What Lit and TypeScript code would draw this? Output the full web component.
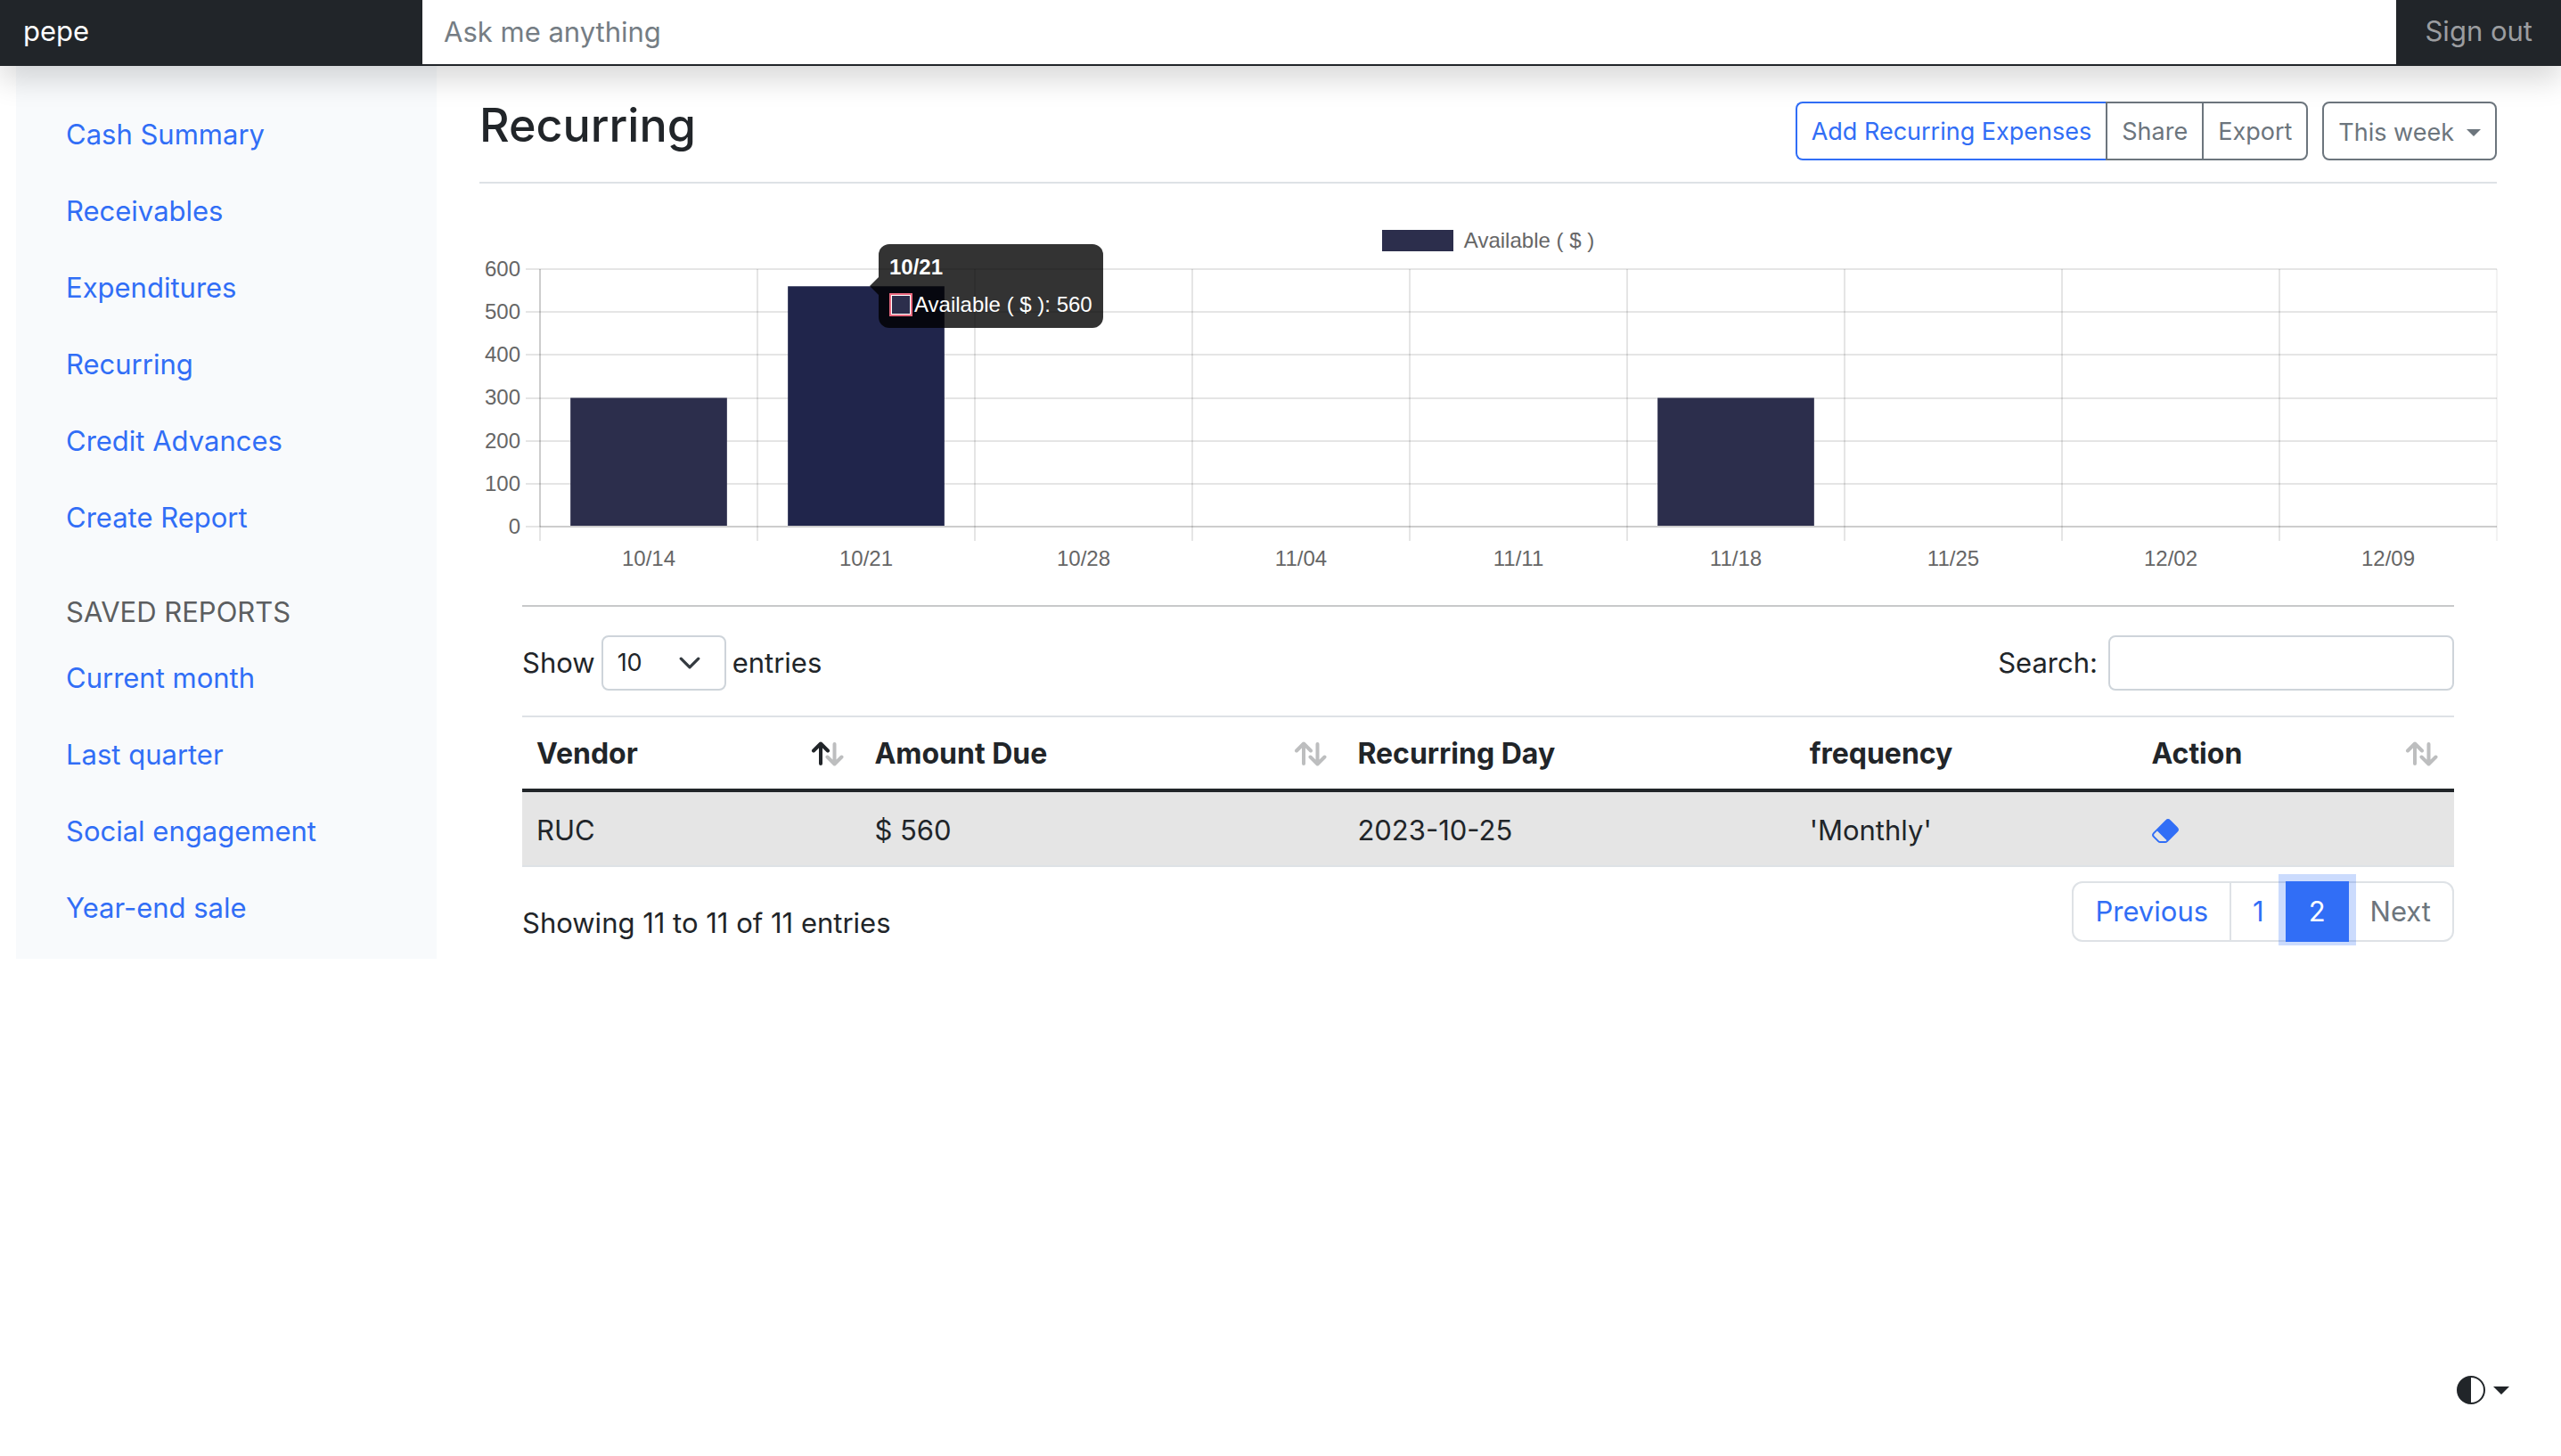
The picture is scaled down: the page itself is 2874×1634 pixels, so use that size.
import { LitElement, html, svg, css } from "lit";
import { customElement, property } from "lit/decorators.js";
import { classMap } from "lit/directives/class-map.js";

const shared = css`
  *,
  *::before,
  *::after {
    box-sizing: border-box;
  }
  a {
    color: #316ef6;
    text-decoration: none;
  }
  button,
  input,
  select {
    font: inherit;
    color: inherit;
    margin: 0;
  }
`;

@customElement("top-bar")
class TopBar extends LitElement {
  static styles = [
    shared,
    css`
      :host {
        display: block;
        position: relative;
        z-index: 2;
      }
      .bar {
        display: flex;
        align-items: stretch;
        height: 74px;
        background: #212529;
        box-shadow: 0 16px 32px rgba(0, 0, 0, 0.15);
      }
      .brand {
        flex: 0 0 474px;
        padding: 16px 26px;
        line-height: 38px;
        color: #fff;
      }
      .ask {
        flex: 1;
        min-width: 0;
        height: 72px;
        padding: 0 24px 2px;
        border: 0;
        border-radius: 0;
        background: #fff;
      }
      .ask::placeholder {
        color: #757d84;
        opacity: 1;
      }
      .out {
        padding: 16px 32px;
        line-height: 38px;
        color: #9b9da0;
        white-space: nowrap;
      }
    `,
  ];
  render() {
    return html`<header class="bar">
      <a class="brand" href="#">pepe</a>
      <input class="ask" type="text" placeholder="Ask me anything" aria-label="Ask me anything" />
      <a class="out" href="#">Sign out</a>
    </header>`;
  }
}

@customElement("side-nav")
class SideNav extends LitElement {
  static styles = [
    shared,
    css`
      :host {
        display: block;
      }
      .nav {
        padding: 34px 24px 14px;
        background: #f8fafc;
      }
      .list {
        list-style: none;
        margin: 0;
        padding: 0;
      }
      .link {
        display: block;
        padding: 18px 32px;
        line-height: 50px;
      }
      .title {
        margin: 22px 0 0;
        padding: 16px 32px 6px;
        font-size: 31px;
        line-height: 50px;
        font-weight: 400;
        text-transform: uppercase;
        color: #5c5e60;
      }
    `,
  ];
  private pages = ["Cash Summary", "Receivables", "Expenditures", "Recurring", "Credit Advances", "Create Report"];
  private reports = ["Current month", "Last quarter", "Social engagement", "Year-end sale"];
  private list(items: string[]) {
    return html`<ul class="list">
      ${items.map((t) => html`<li><a class="link" href="#">${t}</a></li>`)}
    </ul>`;
  }
  render() {
    return html`<nav class="nav">
      ${this.list(this.pages)}
      <h2 class="title">Saved reports</h2>
      ${this.list(this.reports)}
    </nav>`;
  }
}

interface Week {
  label: string;
  value: number;
}

@customElement("bar-chart")
class BarChart extends LitElement {
  static styles = [
    shared,
    css`
      :host {
        display: block;
        font-family: "Liberation Sans", Arial, sans-serif;
        font-size: 24px;
        line-height: 28px;
        color: #666;
      }
      .legend {
        display: flex;
        justify-content: center;
        align-items: center;
        gap: 12px;
        padding: 16px 0 4px;
      }
      .swatch {
        width: 80px;
        height: 24px;
        background: #2c2e4c;
      }
      .body {
        display: grid;
        grid-template-columns: 46px minmax(0, 1fr);
        column-gap: 22px;
      }
      .scale {
        display: flex;
        flex-direction: column;
        justify-content: space-between;
        height: 317px;
        text-align: right;
      }
      .plot {
        position: relative;
        height: 289px;
        margin: 14px 0;
      }
      .canvas {
        display: block;
        width: 100%;
        height: 289px;
        overflow: visible;
      }
      .grid {
        stroke: rgba(0, 0, 0, 0.1);
        stroke-width: 2;
      }
      .edge {
        stroke: rgba(0, 0, 0, 0.1);
        stroke-width: 1;
      }
      .bar {
        fill: #2c2e4c;
      }
      .bar.active {
        fill: #20254b;
      }
      .weeks {
        grid-column: 2;
        display: grid;
        grid-auto-flow: column;
        grid-auto-columns: minmax(0, 1fr);
        margin-top: 8px;
        text-align: center;
      }
      .tip {
        position: absolute;
        top: -28px;
        margin-left: 14px;
        height: 94px;
        padding: 12px;
        border-radius: 12px;
        background: rgba(0, 0, 0, 0.8);
        color: #fff;
        white-space: nowrap;
      }
      .tip::before {
        content: "";
        position: absolute;
        left: -10px;
        top: 37px;
        border: 10px solid transparent;
        border-left-width: 0;
        border-right-color: rgba(0, 0, 0, 0.8);
      }
      .tip-title {
        font-weight: 700;
      }
      .tip-row {
        display: flex;
        align-items: center;
        gap: 2px;
        margin-top: 14px;
      }
      .tip-box {
        width: 26px;
        height: 26px;
        border: 2px solid #ea6a80;
        background: #2c2e4c;
        box-shadow: inset 0 0 0 1px #fff;
      }
    `,
  ];
  @property({ attribute: false }) weeks: Week[] = [];
  @property({ type: Number }) max = 600;
  @property({ type: Number }) active = 1;

  render() {
    const h = 289;
    const steps = [600, 500, 400, 300, 200, 100, 0];
    const n = this.weeks.length;
    const hot = this.weeks[this.active];
    const y = (v: number) => h - (h * v) / this.max;
    return html`
      <div class="legend"><span class="swatch"></span><span>Available ( $ )</span></div>
      <div class="body">
        <div class="scale">${steps.map((s) => html`<span>${s}</span>`)}</div>
        <div class="plot">
          <svg class="canvas" role="img" aria-label="Available ( $ ) by week">
            ${steps.map((s) => svg`<line class="grid" x1="-16" x2="100%" y1=${Math.round(y(s))} y2=${Math.round(y(s))} />`)}
            ${this.weeks.map((_, i) => svg`<line class="grid" x1="${(100 * i) / n}%" x2="${(100 * i) / n}%" y1="0" y2="305" />`)}
            <line class="edge" x1="100%" x2="100%" y1="0" y2="305" />
            <line class="grid" x1="0" x2="100%" y1=${h} y2=${h} />
            <line class="grid" x1="0" x2="0" y1="0" y2=${h} />
            ${this.weeks.map((w, i) =>
              w.value
                ? svg`<rect class=${classMap({ bar: true, active: i === this.active })}
                    x="${(100 * (i + 0.14)) / n}%" width="${72 / n}%" y=${y(w.value)} height=${h - y(w.value) - 1} />`
                : null
            )}
          </svg>
          <div class="tip" style="left:${(100 * (this.active + 0.5)) / n}%">
            <div class="tip-title">${hot.label}</div>
            <div class="tip-row"><span class="tip-box"></span><span>Available ( $ ): ${hot.value}</span></div>
          </div>
        </div>
        <div class="weeks">${this.weeks.map((w) => html`<span>${w.label}</span>`)}</div>
      </div>
    `;
  }
}

@customElement("entries-table")
class EntriesTable extends LitElement {
  static styles = [
    shared,
    css`
      :host {
        display: block;
      }
      .tools {
        display: flex;
        justify-content: space-between;
        align-items: center;
        padding: 32px 0 28px;
      }
      .field {
        display: flex;
        align-items: center;
      }
      .length {
        gap: 7px;
      }
      .find {
        gap: 12px;
      }
      .pick {
        position: relative;
        display: flex;
      }
      .select,
      .search {
        height: 62px;
        border: 2px solid #ced4da;
        border-radius: 8px;
        background: #fff;
        font-size: 27px;
      }
      .select {
        width: 140px;
        padding: 0 16px;
        appearance: none;
      }
      .chevron {
        position: absolute;
        right: 28px;
        top: 18px;
        width: 26px;
        height: 26px;
        pointer-events: none;
      }
      .search {
        width: 388px;
        padding: 0 16px;
      }
      .table {
        width: 100%;
        table-layout: fixed;
        border-collapse: separate;
        border-spacing: 0;
      }
      .vendor { width: 17.5%; }
      .amount { width: 25%; }
      .day { width: 23.4%; }
      .freq { width: 17.7%; }
      .action { width: 16.4%; }
      .head {
        padding: 17px 16px 15px;
        border-top: 2px solid #dee2e6;
        border-bottom: 4px solid #212529;
        line-height: 48px;
        height: 86px;
        font-size: 32px;
        text-align: left;
        font-weight: 700;
      }
      .label {
        display: flex;
        justify-content: space-between;
        align-items: center;
      }
      .sort {
        width: 40px;
        height: 28px;
      }
      .cell {
        height: 84px;
        padding: 18px 16px 14px;
        line-height: 48px;
        background: #e5e5e5;
        border-bottom: 2px solid #dee2e6;
      }
      .erase {
        display: flex;
        width: 32px;
      }
      .eraser {
        width: 32px;
        height: 32px;
        fill: #316ef6;
      }
      .foot {
        display: flex;
        justify-content: space-between;
        align-items: flex-start;
      }
      .info {
        padding-top: 38px;
        line-height: 50px;
      }
      .clip {
        overflow: clip;
        padding: 16px 0 4px 16px;
      }
      .pages {
        display: flex;
        list-style: none;
        margin: 0;
        padding: 0;
      }
      .page {
        display: block;
        height: 68px;
        padding: 8px 24px;
        border: 2px solid #dee2e6;
        line-height: 48px;
      }
      .item + .item .page {
        margin-left: -2px;
      }
      .item:first-child .page {
        border-radius: 12px 0 0 12px;
      }
      .item:last-child .page {
        border-radius: 0 12px 12px 0;
      }
      .page.current {
        position: relative;
        border-color: #316ef6;
        background: #316ef6;
        color: #fff;
        box-shadow: 0 0 0 8px rgba(49, 110, 246, 0.25);
      }
      .page.off {
        color: #6c757d;
      }
    `,
  ];
  private sort(up = "#bdbebf") {
    return svg`<svg class="sort" viewBox="0 0 40 28" fill="none" stroke-width="4" stroke-linecap="round" stroke-linejoin="round" aria-hidden="true">
      <path stroke="#bdbebf" d="M27.500 3V25M19.500 17.500L27.500 25.500L35.500 17.500" />
      <path stroke=${up} d="M12 25V3M4 10.500L12 2.500L20 10.500" />
    </svg>`;
  }
  render() {
    return html`
      <div class="tools">
        <label class="field length" for="length">Show
          <span class="pick">
            <select class="select" id="length"><option>10</option><option>25</option><option>50</option></select>
            <svg class="chevron" viewBox="0 0 16 16" fill="none" stroke="#343a40" stroke-width="2" stroke-linecap="round" stroke-linejoin="round" aria-hidden="true"><path d="m2 5 6 6 6-6" /></svg>
          </span>
          entries</label>
        <label class="field find" for="search">Search: <input class="search" id="search" type="search" /></label>
      </div>
      <table class="table">
        <thead>
          <tr>
            <th class="head vendor" scope="col"><div class="label">Vendor ${this.sort("#212529")}</div></th>
            <th class="head amount" scope="col"><div class="label">Amount Due ${this.sort()}</div></th>
            <th class="head day" scope="col">Recurring Day</th>
            <th class="head freq" scope="col">frequency</th>
            <th class="head action" scope="col"><div class="label">Action ${this.sort()}</div></th>
          </tr>
        </thead>
        <tbody>
          <tr>
            <td class="cell">RUC</td>
            <td class="cell">$ 560</td>
            <td class="cell">2023-10-25</td>
            <td class="cell">'Monthly'</td>
            <td class="cell">
              <a class="erase" href="#" aria-label="Delete">
                <svg class="eraser" viewBox="0 0 16 16" aria-hidden="true">
                  <path d="M8.086 2.207a2 2 0 0 1 2.828 0l3.879 3.879a2 2 0 0 1 0 2.828l-5.5 5.5A2 2 0 0 1 7.879 15H5.12a2 2 0 0 1-1.414-.586l-2.5-2.5a2 2 0 0 1 0-2.828zm.66 11.34L3.453 8.254 1.914 9.793a1 1 0 0 0 0 1.414l2.5 2.5a1 1 0 0 0 .707.293H7.88a1 1 0 0 0 .707-.293z" />
                </svg>
              </a>
            </td>
          </tr>
        </tbody>
      </table>
      <div class="foot">
        <div class="info">Showing 11 to 11 of 11 entries</div>
        <nav class="clip" aria-label="Pages">
          <ul class="pages">
            <li class="item"><a class="page" href="#">Previous</a></li>
            <li class="item"><a class="page" href="#">1</a></li>
            <li class="item"><a class="page current" href="#" aria-current="page">2</a></li>
            <li class="item"><a class="page off" href="#" aria-disabled="true">Next</a></li>
          </ul>
        </nav>
      </div>
    `;
  }
}

@customElement("app-root")
class AppRoot extends LitElement {
  static styles = [
    shared,
    css`
      :host {
        display: block;
        position: relative;
        min-height: 100vh;
        background: #fff;
        color: #212529;
        font-family: Inter, "Liberation Sans", sans-serif;
        font-size: 31px;
        line-height: 48px;
      }
      .layout {
        display: grid;
        grid-template-columns: minmax(0, 1fr) minmax(0, 5fr);
        align-items: start;
        padding: 0 24px 0 18px;
      }
      .main {
        padding: 0 48px;
      }
      .heading {
        display: flex;
        justify-content: space-between;
        align-items: flex-start;
        padding: 32px 0 16px;
        border-bottom: 2px solid #dee2e6;
      }
      .title {
        margin: 0;
        padding: 2px 0 14px;
        font-size: 52px;
        line-height: 66px;
        font-weight: 500;
      }
      .actions {
        display: flex;
        gap: 16px;
        padding-top: 8px;
      }
      .group {
        display: flex;
      }
      .btn {
        height: 66px;
        padding: 2px 16px 0;
        border: 2px solid #6c757d;
        background: transparent;
        color: #6c757d;
        font-size: 27px;
        line-height: 42px;
        white-space: nowrap;
      }
      .btn.first {
        border-color: #316ef6;
        border-right: 0;
        border-radius: 8px 0 0 8px;
        color: #316ef6;
      }
      .btn.last {
        margin-left: -2px;
        border-radius: 0 8px 8px 0;
      }
      .btn.drop {
        display: flex;
        align-items: center;
        gap: 14px;
        padding-top: 4px;
        border-radius: 8px;
      }
      .caret {
        border: 8px solid transparent;
        border-top-color: currentColor;
        border-bottom: 0;
      }
      .chart {
        margin-top: 34px;
      }
      .records {
        margin: 0 48px;
      }
      .rule {
        margin: 38px 0 0;
        border: 0;
        border-top: 2px solid #c8c9ca;
      }
      .theme {
        position: absolute;
        right: 58px;
        bottom: 58px;
        display: flex;
        align-items: center;
        gap: 9px;
        padding: 0;
        border: 0;
        background: none;
      }
      .theme .caret {
        border-width: 9px 9px 0;
      }
      .half {
        width: 32px;
        height: 32px;
        fill: currentColor;
      }
    `,
  ];
  private weeks: Week[] = [
    { label: "10/14", value: 300 },
    { label: "10/21", value: 560 },
    { label: "10/28", value: 0 },
    { label: "11/04", value: 0 },
    { label: "11/11", value: 0 },
    { label: "11/18", value: 300 },
    { label: "11/25", value: 0 },
    { label: "12/02", value: 0 },
    { label: "12/09", value: 0 },
  ];
  render() {
    return html`
      <top-bar></top-bar>
      <div class="layout">
        <side-nav></side-nav>
        <main class="main">
          <div class="heading">
            <h1 class="title">Recurring</h1>
            <div class="actions">
              <div class="group">
                <button class="btn first" type="button">Add Recurring Expenses</button>
                <button class="btn" type="button">Share</button>
                <button class="btn last" type="button">Export</button>
              </div>
              <button class="btn drop" type="button">This week <span class="caret"></span></button>
            </div>
          </div>
          <bar-chart class="chart" .weeks=${this.weeks}></bar-chart>
          <section class="records">
            <hr class="rule" />
            <entries-table></entries-table>
          </section>
        </main>
      </div>
      <button class="theme" type="button" aria-label="Toggle theme">
        <svg class="half" viewBox="0 0 16 16" aria-hidden="true"><path d="M8 15A7 7 0 1 0 8 1zm0 1A8 8 0 1 1 8 0a8 8 0 0 1 0 16" /></svg>
        <span class="caret"></span>
      </button>
    `;
  }
}
